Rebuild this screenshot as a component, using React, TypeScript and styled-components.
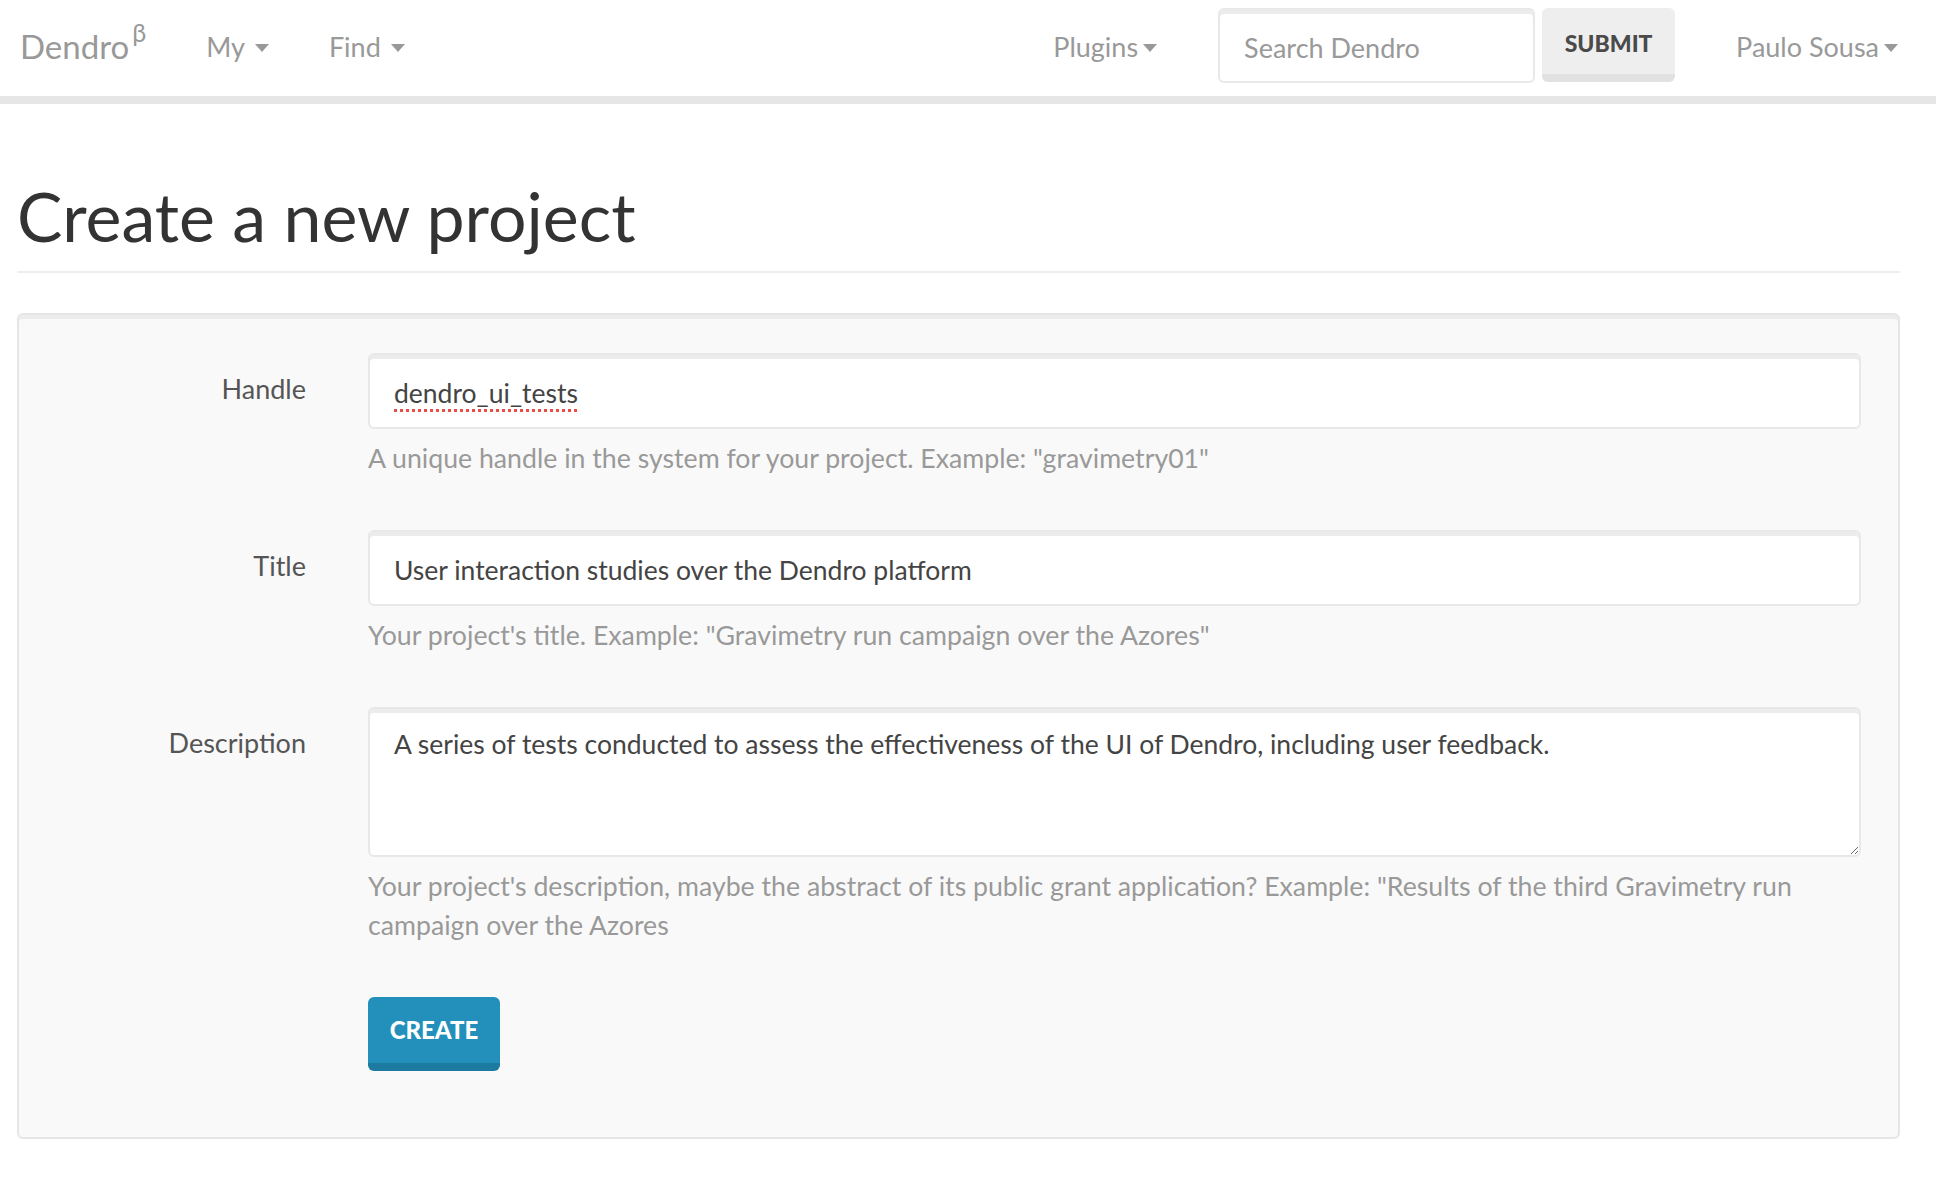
import React from 'react';
import styled, { createGlobalStyle } from 'styled-components';

const Global = createGlobalStyle`
  html, body { margin: 0; padding: 0; background: #fff; }
  body { font-family: Lato, "Noto Sans", sans-serif; color: #555; }
  * { box-sizing: border-box; }
`;

const Navbar = styled.nav`
  display: flex;
  align-items: center;
  height: 104px;
  padding: 2px 8px 6px 20px;
  border-bottom: 8px solid #e6e6e6;
  background: #fff;
`;

const Brand = styled.a`
  font-size: 33px;
  color: #999;
  text-decoration: none;
  padding-right: 30px;
  display: flex;
  align-items: flex-start;
  sup { font-size: 25px; line-height: 1; margin-left: 3px; margin-top: -6px; }
`;

const NavLink = styled.a<{ $gap: number }>`
  display: flex;
  align-items: center;
  gap: ${(p) => p.$gap}px;
  font-size: 27px;
  color: #999;
  padding: 0 30px;
  text-decoration: none;
`;

const Caret = styled.span`
  width: 0;
  height: 0;
  border-top: 8px solid #999;
  border-left: 7px solid transparent;
  border-right: 7px solid transparent;
  margin-top: 3px;
`;

const Right = styled.div`
  margin-left: auto;
  display: flex;
  align-items: center;
`;

const SearchForm = styled.form`
  display: flex;
  gap: 7px;
  margin: -2px 31px 0;
`;

const SearchInput = styled.input`
  width: 317px;
  height: 75px;
  border: 2px solid #e8e8e8;
  border-radius: 6px;
  box-shadow: inset 0 4px 0 #ececec;
  font: inherit;
  font-size: 27px;
  color: #555;
  padding: 4px 24px 0;
  outline: none;
  &::placeholder { color: #999; }
`;

const SubmitButton = styled.button`
  width: 133px;
  height: 74px;
  background: #eeeeee;
  border: none;
  border-bottom: 8px solid #e1e1e1;
  border-radius: 6px;
  font-family: inherit;
  font-size: 23px;
  font-weight: 900;
  color: #4a4a4a;
  padding: 4px 0 0;
`;

const Page = styled.main`
  padding: 0 36px 40px 17px;
`;

const Header = styled.header`
  border-bottom: 2px solid #eeeeee;
  padding: 75px 0 17px;
`;

const Title = styled.h1`
  margin: 0;
  font-size: 68px;
  font-weight: 400;
  line-height: 1.1;
  color: #333;
`;

const Well = styled.section`
  margin-top: 40px;
  background: #f9f9f9;
  border: 2px solid #e6e6e6;
  border-radius: 6px;
  box-shadow: inset 0 4px 0 #ececec;
  padding: 38px 37px 66px 0;
`;

const Row = styled.div<{ $last?: boolean }>`
  display: grid;
  grid-template-columns: 287px 1fr;
  column-gap: 62px;
  margin-bottom: ${(p) => (p.$last ? 0 : 52)}px;
`;

const Label = styled.label`
  text-align: right;
  font-size: 27px;
  line-height: 39px;
  padding-top: 16px;
  color: #555;
`;

const Field = styled.div`
  display: flex;
  flex-direction: column;
  align-items: flex-start;
`;

const InputWrap = styled.div`
  position: relative;
  width: 100%;
`;

const TextInput = styled.input`
  width: 100%;
  height: 76px;
  border: 2px solid #e8e8e8;
  border-radius: 6px;
  box-shadow: inset 0 4px 0 #ececec;
  background: #fff;
  font: inherit;
  font-size: 26.5px;
  color: #444;
  padding: 4px 24px 0;
  outline: none;
`;

const SpellMark = styled.span`
  position: absolute;
  left: 26px;
  top: 0;
  height: 76px;
  padding-top: 4px;
  display: flex;
  align-items: center;
  font-size: 26.5px;
  color: transparent;
  pointer-events: none;
  text-decoration: underline dotted #ec4a44;
  text-decoration-thickness: 3px;
  text-underline-offset: 6px;
`;

const TextArea = styled.textarea`
  width: 100%;
  height: 150px;
  border: 2px solid #e8e8e8;
  border-radius: 6px;
  box-shadow: inset 0 4px 0 #ececec;
  background: #fff;
  font: inherit;
  font-size: 26.5px;
  line-height: 39px;
  color: #444;
  padding: 16px 24px;
  outline: none;
`;

const Help = styled.p`
  margin: 10px 0 0;
  font-size: 26.7px;
  line-height: 39px;
  color: #999;
`;

const CreateButton = styled.button`
  width: 132px;
  height: 74px;
  background: #2290bb;
  border: none;
  border-bottom: 8px solid #1d7ba2;
  border-radius: 6px;
  color: #fff;
  font-family: inherit;
  font-size: 24px;
  font-weight: 900;
  padding: 0;
`;

export default function App() {
  return (
    <>
      <Global />
      <Navbar>
        <Brand href="#">Dendro<sup>β</sup></Brand>
        <NavLink href="#" $gap={10}>My <Caret /></NavLink>
        <NavLink href="#" $gap={10}>Find <Caret /></NavLink>
        <Right>
          <NavLink href="#" $gap={5}>Plugins<Caret /></NavLink>
          <SearchForm onSubmit={(e) => e.preventDefault()}>
            <SearchInput placeholder="Search Dendro" />
            <SubmitButton type="submit">SUBMIT</SubmitButton>
          </SearchForm>
          <NavLink href="#" $gap={5}>Paulo Sousa<Caret /></NavLink>
        </Right>
      </Navbar>
      <Page>
        <Header>
          <Title>Create a new project</Title>
        </Header>
        <Well>
          <Row>
            <Label>Handle</Label>
            <Field>
              <InputWrap>
                <TextInput readOnly defaultValue="dendro_ui_tests" />
                <SpellMark aria-hidden="true">dendro_ui_tests</SpellMark>
              </InputWrap>
              <Help>A unique handle in the system for your project. Example: "gravimetry01"</Help>
            </Field>
          </Row>
          <Row>
            <Label>Title</Label>
            <Field>
              <TextInput readOnly defaultValue="User interaction studies over the Dendro platform" />
              <Help>Your project's title. Example: "Gravimetry run campaign over the Azores"</Help>
            </Field>
          </Row>
          <Row>
            <Label>Description</Label>
            <Field>
              <TextArea readOnly defaultValue="A series of tests conducted to assess the effectiveness of the UI of Dendro, including user feedback." />
              <Help>
                Your project's description, maybe the abstract of its public grant application? Example: "Results of the third Gravimetry run campaign over the Azores
              </Help>
            </Field>
          </Row>
          <Row $last>
            <span />
            <Field>
              <CreateButton type="button">CREATE</CreateButton>
            </Field>
          </Row>
        </Well>
      </Page>
    </>
  );
}
